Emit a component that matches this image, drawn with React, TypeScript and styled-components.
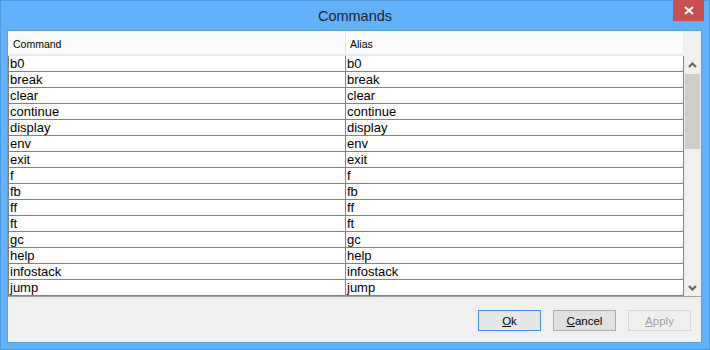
import React from 'react';
import styled, { createGlobalStyle } from 'styled-components';

const GlobalStyle = createGlobalStyle`
  html, body {
    margin: 0;
    padding: 0;
    background: #ffffff;
  }
  * {
    box-sizing: border-box;
  }
`;

const Window = styled.div`
  width: 710px;
  height: 350px;
  border: 1px solid #4f96dd;
  background: #62b1fb;
  display: flex;
  flex-direction: column;
  font-family: "Liberation Sans", Arial, sans-serif;
`;

const TitleBar = styled.div`
  height: 29px;
  display: grid;
  grid-template-columns: 1fr auto 1fr;
  align-items: start;
`;

const Title = styled.div`
  grid-column: 2;
  font-size: 14.5px;
  line-height: 31px;
  color: #1e1e1e;
`;

const CloseButton = styled.div`
  grid-column: 3;
  justify-self: end;
  width: 31px;
  height: 21px;
  margin-top: -1px;
  margin-right: 5px;
  background: #c75050;
  display: flex;
  align-items: center;
  justify-content: center;
`;

const Client = styled.div`
  flex: 1;
  margin: 0 7px 6px 6px;
  border: 1px solid #5f9fd8;
  background: #f0f0f0;
  display: flex;
  flex-direction: column;
`;

const ListFrame = styled.div`
  display: flex;
  border-bottom: 1px solid #a0a0a0;
`;

const Table = styled.div`
  width: 676px;
  display: flex;
  flex-direction: column;
`;

const HeaderRow = styled.div`
  height: 25px;
  display: grid;
  grid-template-columns: 337px 1fr;
  background: #fcfcfc;
  border-bottom: 2px solid #e3eaf2;
`;

const HeaderCell = styled.div<{ $divider?: boolean }>`
  font-size: 10.5px;
  line-height: 23px;
  padding-top: 2px;
  padding-left: ${p => (p.$divider ? '4px' : '5px')};
  color: #000;
  border-left: ${p => (p.$divider ? '1px solid #e5e5e5' : 'none')};
  border-right: ${p => (p.$divider ? '1px solid #e9eef4' : 'none')};
`;

const Row = styled.div`
  height: 16px;
  display: grid;
  grid-template-columns: 337px 338px 1px;
  border-bottom: 1px solid #828282;
  background: #ffffff;
`;

const Cell = styled.div`
  border-left: 1px solid #828282;
  font-size: 13px;
  line-height: 16px;
  padding-left: 1px;
  color: #000;
  white-space: nowrap;
  overflow: hidden;
`;

const RowEnd = styled.div`
  background: #828282;
`;

const ScrollColumn = styled.div`
  flex: 1;
  display: flex;
  flex-direction: column;
`;

const ScrollCorner = styled.div`
  height: 25px;
  background: #f0f0f0;
`;

const Scrollbar = styled.div`
  flex: 1;
  background: #f0f0f0;
  display: flex;
  flex-direction: column;
  align-items: center;
`;

const ArrowButton = styled.div`
  height: 17px;
  width: 100%;
  display: flex;
  align-items: center;
  justify-content: center;
`;

const Track = styled.div`
  flex: 1;
  width: 100%;
  padding: 1px 1px 0 1px;
`;

const Thumb = styled.div`
  height: 75px;
  background: #cdcdcd;
`;

const Footer = styled.div`
  flex: 1;
  display: flex;
  justify-content: flex-end;
  align-items: flex-start;
  gap: 12px;
  padding: 13px 10px 0 0;
`;

const Button = styled.div<{ $variant?: 'default' | 'normal' | 'disabled' }>`
  width: 63px;
  height: 21px;
  display: flex;
  align-items: center;
  justify-content: center;
  font-size: 11.5px;
  border: 1px solid
    ${p => (p.$variant === 'default' ? '#3c94ee' : p.$variant === 'disabled' ? '#d5d5d5' : '#adadad')};
  background: ${p => (p.$variant === 'disabled' ? '#efefef' : p.$variant === 'default' ? '#e7e7e7' : '#e1e1e1')};
  color: ${p => (p.$variant === 'disabled' ? '#a0a0a0' : '#000')};
`;

const commands = [
  'b0', 'break', 'clear', 'continue', 'display', 'env', 'exit', 'f',
  'fb', 'ff', 'ft', 'gc', 'help', 'infostack', 'jump',
];

const Chevron = ({ up }: { up?: boolean }) => (
  <svg width="9" height="6" viewBox="0 0 9 6">
    <path
      d={up ? 'M1 5 L4.5 1.5 L8 5' : 'M1 1 L4.5 4.5 L8 1'}
      fill="none"
      stroke="#606060"
      strokeWidth="2"
    />
  </svg>
);

const App: React.FC = () => {
  return (
    <>
      <GlobalStyle />
      <Window>
        <TitleBar>
          <Title>Commands</Title>
          <CloseButton>
            <svg width="10" height="9" viewBox="0 0 10 9">
              <path d="M1 1 L9 8 M9 1 L1 8" stroke="#ffffff" strokeWidth="2" />
            </svg>
          </CloseButton>
        </TitleBar>
        <Client>
          <ListFrame>
            <Table>
              <HeaderRow>
                <HeaderCell>Command</HeaderCell>
                <HeaderCell $divider>Alias</HeaderCell>
              </HeaderRow>
              {commands.map(c => (
                <Row key={c}>
                  <Cell>{c}</Cell>
                  <Cell>{c}</Cell>
                  <RowEnd />
                </Row>
              ))}
            </Table>
            <ScrollColumn>
              <ScrollCorner />
              <Scrollbar>
                <ArrowButton>
                  <Chevron up />
                </ArrowButton>
                <Track>
                  <Thumb />
                </Track>
                <ArrowButton>
                  <Chevron />
                </ArrowButton>
              </Scrollbar>
            </ScrollColumn>
          </ListFrame>
          <Footer>
            <Button $variant="default"><span><u>O</u>k</span></Button>
            <Button><span><u>C</u>ancel</span></Button>
            <Button $variant="disabled"><span><u>A</u>pply</span></Button>
          </Footer>
        </Client>
      </Window>
    </>
  );
};

export default App;
